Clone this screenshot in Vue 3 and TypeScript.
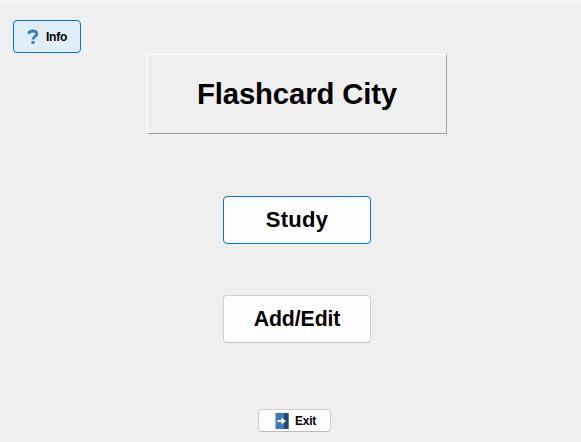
<script setup lang="ts">
import { ref } from 'vue'

const title = ref<string>('Flashcard City')
</script>

<template>
  <main class="window">
    <header class="toolbar">
      <button class="btn info" type="button">
        <svg class="question" width="12" height="16" viewBox="0 0 12 16">
          <path d="M1.7 5C2 2.8 3.6 2 5.8 2C8.4 2 9.8 3.1 9.8 4.9C9.8 7.3 6.2 7.3 6 10.5" fill="none" stroke="#427cb8" stroke-width="2.8" />
          <rect x="4.5" y="12" width="3" height="3" fill="#427cb8" />
        </svg>
        <span>Info</span>
      </button>
    </header>
    <section class="content">
      <h1 class="title"><span>{{ title }}</span></h1>
      <button class="btn large study" type="button"><span>Study</span></button>
      <button class="btn large edit" type="button"><span>Add/Edit</span></button>
      <button class="btn exit" type="button">
        <svg width="14" height="16" viewBox="0 0 14 16">
          <rect x="0.5" width="13" height="16" fill="#3f79b5" />
          <path d="M9 0H13.5V16H9Z" fill="#25476f" />
          <path d="M2.5 7H6.5V4.5L11 8L6.5 11.5V9H2.5Z" fill="#fff" />
        </svg>
        <span>Exit</span>
      </button>
    </section>
  </main>
</template>

<style>
body {
  margin: 0;
  background: #efefef;
}
</style>

<style scoped>
.window {
  box-sizing: border-box;
  width: 581px;
  height: 442px;
  overflow: hidden;
  border-top: 4px solid #f3f3f3;
  background: #efefef;
  color: #000;
  font-family: "Liberation Sans", Arial, sans-serif;
}
.toolbar {
  display: flex;
  height: 34px;
  padding: 16px 0 0 13px;
  box-sizing: border-box;
}
.btn {
  display: flex;
  flex: none;
  align-items: center;
  justify-content: center;
  box-sizing: border-box;
  padding: 0;
  border: 1px solid #d0d0d0;
  border-bottom-color: #bababa;
  border-radius: 4px;
  background: #fdfdfd;
  color: #000;
  font: bold 12px/14px "Liberation Sans", Arial, sans-serif;
}
.info {
  gap: 7px;
  width: 68px;
  height: 33px;
  border-color: #0078d4;
  background: #e0eef9;
  letter-spacing: -0.2px;
}
.content {
  display: flex;
  flex-direction: column;
  align-items: center;
  width: 300px;
  margin: 16px 0 0 147px;
}
.title {
  display: flex;
  align-items: center;
  justify-content: center;
  box-sizing: border-box;
  width: 300px;
  height: 80px;
  margin: 0;
  border: 1px solid;
  border-color: #fff #a0a0a0 #a0a0a0 #fff;
  font-size: 29.3px;
  line-height: 34px;
  letter-spacing: -0.15px;
}
.large {
  width: 148px;
  height: 48px;
  font-size: 21.3px;
  line-height: 24px;
}
.study {
  margin-top: 62px;
  border-color: #0078d4;
  font-size: 22px;
  letter-spacing: 0.3px;
}
.edit {
  margin-top: 51px;
  letter-spacing: -0.1px;
}
.exit {
  align-self: flex-start;
  gap: 6px;
  width: 73px;
  height: 23px;
  margin: 66px 0 0 111px;
  padding-left: 2px;
  letter-spacing: -0.2px;
}
</style>
